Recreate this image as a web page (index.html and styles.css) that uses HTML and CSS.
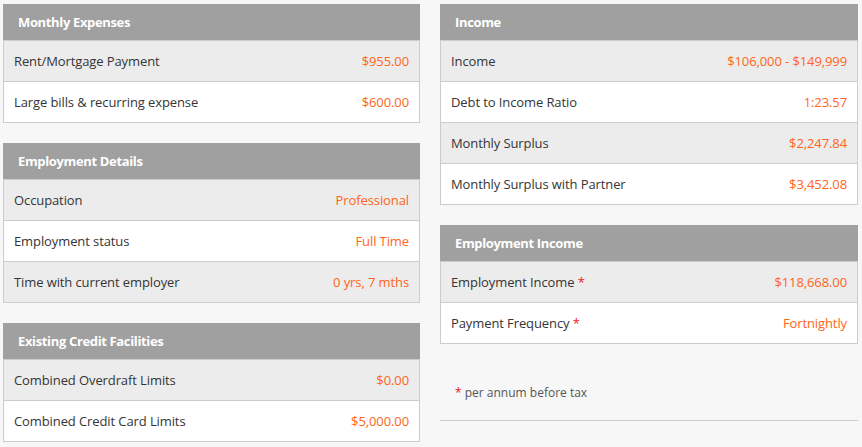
FILE: index.html
```html
<!DOCTYPE html>
<html>
<head>
<meta charset="utf-8">
<link rel="stylesheet" href="styles.css">
</head>
<body>
<div class="page">
  <div class="col">
    <div class="panel">
      <div class="head">Monthly Expenses</div>
      <div class="row alt"><span>Rent/Mortgage Payment</span><span class="val">$955.00</span></div>
      <div class="row"><span>Large bills &amp; recurring expense</span><span class="val">$600.00</span></div>
    </div>
    <div class="panel">
      <div class="head">Employment Details</div>
      <div class="row alt"><span>Occupation</span><span class="val">Professional</span></div>
      <div class="row"><span>Employment status</span><span class="val">Full Time</span></div>
      <div class="row alt"><span>Time with current employer</span><span class="val">0 yrs, 7 mths</span></div>
    </div>
    <div class="panel">
      <div class="head">Existing Credit Facilities</div>
      <div class="row alt"><span>Combined Overdraft Limits</span><span class="val">$0.00</span></div>
      <div class="row"><span>Combined Credit Card Limits</span><span class="val">$5,000.00</span></div>
    </div>
  </div>
  <div class="col">
    <div class="panel">
      <div class="head">Income</div>
      <div class="row alt"><span>Income</span><span class="val">$106,000 - $149,999</span></div>
      <div class="row"><span>Debt to Income Ratio</span><span class="val">1:23.57</span></div>
      <div class="row alt"><span>Monthly Surplus</span><span class="val">$2,247.84</span></div>
      <div class="row"><span>Monthly Surplus with Partner</span><span class="val">$3,452.08</span></div>
    </div>
    <div class="panel">
      <div class="head">Employment Income</div>
      <div class="row alt"><span>Employment Income <span class="req">*</span></span><span class="val">$118,668.00</span></div>
      <div class="row"><span>Payment Frequency <span class="req">*</span></span><span class="val">Fortnightly</span></div>
    </div>
    <div class="foot">
      <p class="note"><span class="req">*</span> per annum before tax</p>
      <hr class="rule">
    </div>
  </div>
</div>
</body>
</html>
```
FILE: styles.css
```css
html, body {
  margin: 0;
  padding: 0;
  background: #f7f7f7;
}
body {
  font-family: "Open Sans", "Liberation Sans", sans-serif;
  font-size: 13px;
  color: #353535;
}
.page {
  display: grid;
  grid-template-columns: 417px 418px;
  column-gap: 20px;
  padding: 4px 0 0 3px;
  align-items: start;
}
.col {
  display: flex;
  flex-direction: column;
  gap: 20px;
}
.panel {
  border: 1px solid #cccccc;
  border-top: none;
  background: #fff;
}
.head {
  background: #a0a0a0;
  color: #fff;
  font-weight: 700;
  height: 36px;
  line-height: 36px;
  margin: 0 -1px;
  padding-left: 15px;
  letter-spacing: -0.35px;
}
.row {
  display: flex;
  justify-content: space-between;
  align-items: center;
  height: 40px;
  padding: 0 10px;
  border-top: 1px solid #cccccc;
  letter-spacing: -0.1px;
}
.alt {
  background: #ececec;
}
.val {
  color: #ff6519;
}
.req {
  color: #f0141c;
}
.foot {
  display: flex;
  flex-direction: column;
}
.note {
  margin: 14px 0 0 0;
  padding-left: 15px;
  color: #555;
  font-size: 12px;
  height: 30px;
  line-height: 30px;
}
.rule {
  margin: 12px 0 0 0;
  border: none;
  border-top: 1px solid #cccccc;
}
```
